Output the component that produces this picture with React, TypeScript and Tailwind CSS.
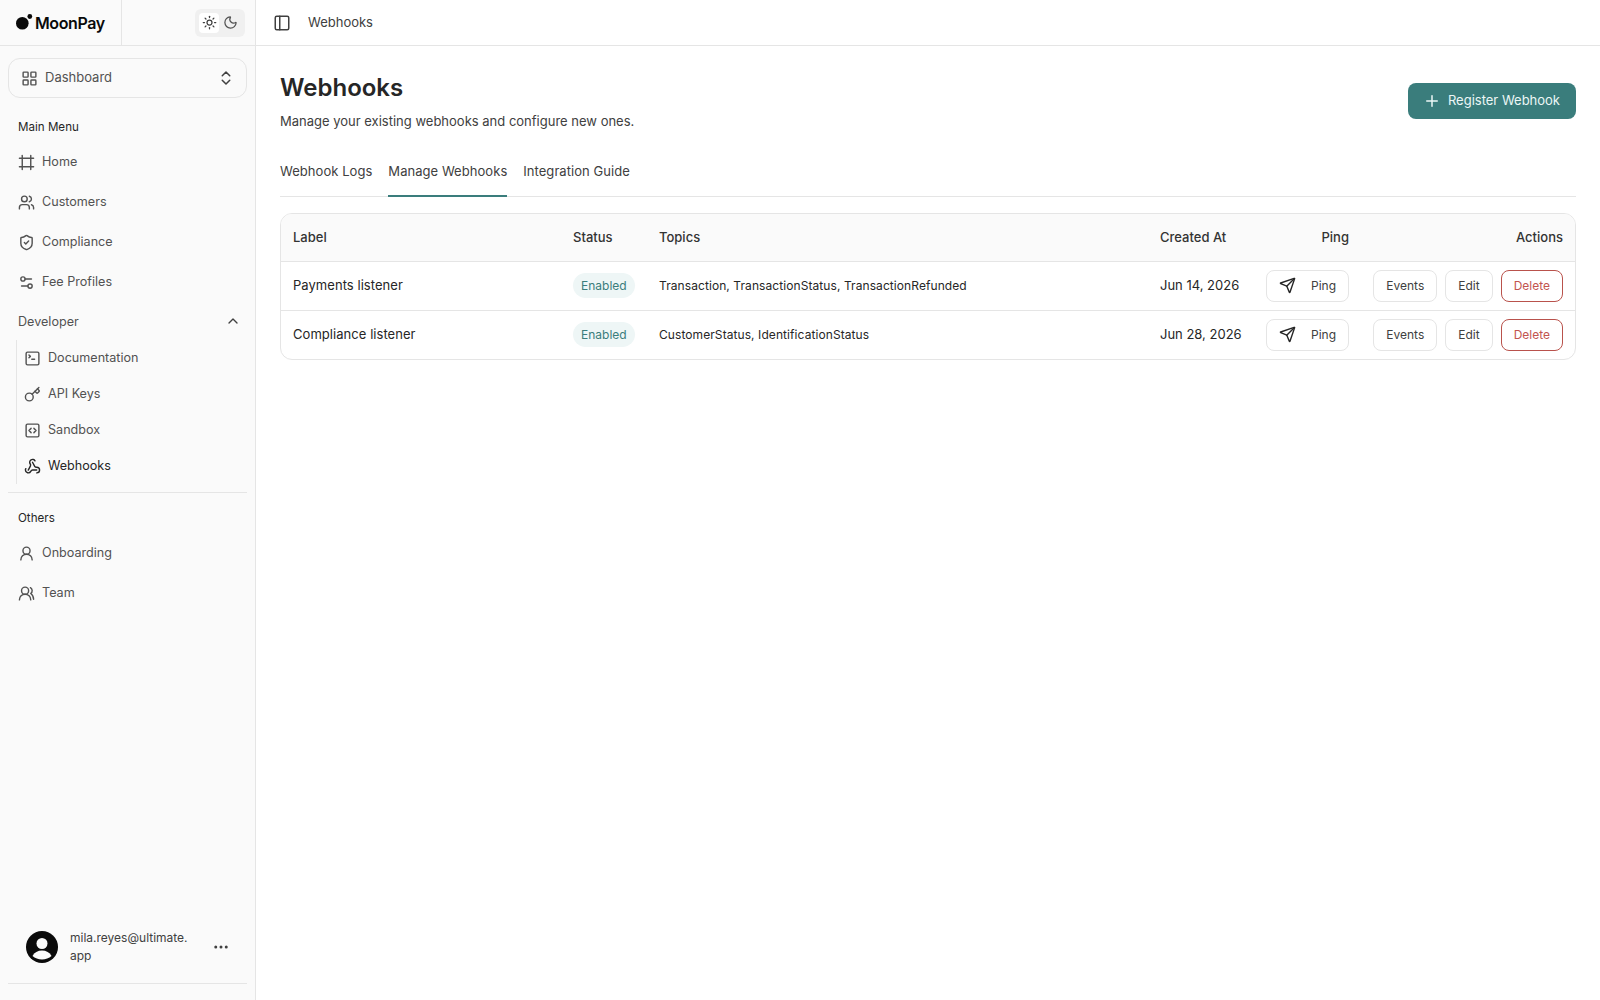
import {
  ChevronUp,
  ChevronsUpDown,
  Ellipsis,
  Frame,
  Key,
  LayoutGrid,
  Moon,
  PanelLeft,
  Plus,
  Send,
  Settings2,
  ShieldCheck,
  SquareCode,
  SquareTerminal,
  Sun,
  UserRound,
  Users,
  UsersRound,
  Webhook,
} from 'lucide-react';
import type { ReactNode } from 'react';

const webhooks = [
  {
    label: 'Payments listener',
    topics: 'Transaction, TransactionStatus, TransactionRefunded',
    created: 'Jun 14, 2026',
  },
  {
    label: 'Compliance listener',
    topics: 'CustomerStatus, IdentificationStatus',
    created: 'Jun 28, 2026',
  },
];

function NavItem({ icon, label }: { icon: ReactNode; label: string }) {
  return (
    <div className="flex h-10 items-center gap-[7px] pl-[18px] text-[12.6px] text-[#525252]">
      {icon}
      <span>{label}</span>
    </div>
  );
}

function SubItem({ icon, label, active }: { icon: ReactNode; label: string; active?: boolean }) {
  return (
    <div className={`flex h-9 items-center gap-[7px] pl-[7px] text-[12.6px] ${active ? 'text-[#262626]' : 'text-[#525252]'}`}>
      {icon}
      <span>{label}</span>
    </div>
  );
}

function ActionButton({ children, danger }: { children: ReactNode; danger?: boolean }) {
  return (
    <button
      className={`flex h-8 items-center rounded-lg border bg-white px-3 text-xs ${
        danger ? 'border-[#b9524c] text-[#c2554f]' : 'border-[#e5e5e5] text-[#404040]'
      }`}
    >
      {children}
    </button>
  );
}

function Sidebar() {
  return (
    <aside className="flex h-full w-[256px] shrink-0 flex-col border-r border-[#e5e5e5] bg-[#fafafa]">
      <div className="flex h-[46px] shrink-0 border-b border-[#e5e5e5]">
        <div className="flex w-[122px] items-center border-r border-[#e5e5e5] pl-4">
          <svg width="19" height="16" viewBox="0 0 19 16" className="-mt-[2px]">
            <circle cx="6.300" cy="9.300" r="6.300" fill="#0a0a0a" />
            <circle cx="13.800" cy="2.500" r="2.400" fill="#0a0a0a" />
          </svg>
          <span className="text-base font-semibold tracking-tight text-[#0a0a0a]">MoonPay</span>
        </div>
        <div className="flex flex-1 items-center justify-end pr-[10px]">
          <div className="flex h-7 w-[50px] items-center rounded-md bg-[#f0f0f0] p-1">
            <div className="flex h-5 w-5 items-center justify-center rounded-sm bg-white">
              <Sun size={15} className="text-[#404040]" />
            </div>
            <div className="flex h-5 w-[22px] items-center justify-center">
              <Moon size={15} className="text-[#525252]" />
            </div>
          </div>
        </div>
      </div>

      <div className="mx-2 mt-3 flex h-10 shrink-0 items-center justify-between rounded-xl border border-[#e5e5e5] pr-[11px] pl-3 text-[13px] text-[#525252]">
        <div className="flex items-center gap-[7px]">
          <LayoutGrid size={17} />
          <span>Dashboard</span>
        </div>
        <ChevronsUpDown size={18} className="text-[#404040]" />
      </div>

      <p className="mt-[21px] pl-[18px] text-[11.6px] leading-4 text-[#262626]">Main Menu</p>
      <div className="mt-[7px]">
        <NavItem icon={<Frame size={17} />} label="Home" />
        <NavItem icon={<Users size={17} />} label="Customers" />
        <NavItem icon={<ShieldCheck size={17} />} label="Compliance" />
        <NavItem icon={<Settings2 size={17} />} label="Fee Profiles" />
        <div className="flex h-10 items-center justify-between pr-[14px] pl-[18px] text-[12.6px] text-[#525252]">
          <span>Developer</span>
          <ChevronUp size={16} className="-mt-[2px] text-[#404040]" />
        </div>
      </div>
      <div className="-mt-[2px] ml-4 border-l border-[#e5e5e5]">
        <SubItem icon={<SquareTerminal size={17} />} label="Documentation" />
        <SubItem icon={<Key size={17} />} label="API Keys" />
        <SubItem icon={<SquareCode size={17} />} label="Sandbox" />
        <SubItem icon={<Webhook size={17} />} label="Webhooks" active />
      </div>
      <div className="mx-2 mt-2 border-t border-[#e5e5e5]" />
      <p className="mt-[17px] pl-[18px] text-[11.6px] leading-4 text-[#262626]">Others</p>
      <div className="mt-[7px]">
        <NavItem icon={<UserRound size={17} />} label="Onboarding" />
        <NavItem icon={<UsersRound size={17} />} label="Team" />
      </div>

      <div className="mx-2 mt-auto mb-4 border-b border-[#e5e5e5] pb-[18px]">
        <div className="flex items-center pl-[18px]">
          <svg width="32" height="32" viewBox="0 0 32 32" className="shrink-0">
            <circle cx="16" cy="16" r="16" fill="#0a0a0a" />
            <circle cx="16" cy="12.500" r="5.500" fill="#fafafa" />
            <path d="M6.500 25c1.800-3.600 5.400-5.500 9.500-5.500s7.700 1.900 9.500 5.500c-2.500 2.200-5.800 3.500-9.500 3.500s-7-1.300-9.500-3.500z" fill="#fafafa" />
          </svg>
          <div className="ml-3 w-[124px] text-xs leading-[18px] text-[#404040]">mila.reyes@ultimate.<br />app</div>
          <Ellipsis size={18} className="ml-[18px] text-[#404040]" />
        </div>
      </div>
    </aside>
  );
}

export default function App() {
  return (
    <div className="flex h-screen w-full bg-white font-['Inter',sans-serif] text-[#262626]">
      <Sidebar />
      <main className="flex min-w-0 flex-1 flex-col">
        <header className="flex h-[46px] shrink-0 items-center gap-[17px] border-b border-[#e5e5e5] pl-[17px]">
          <PanelLeft size={18} className="text-[#404040]" />
          <span className="text-[13px] text-[#404040]">Webhooks</span>
        </header>

        <div className="px-6 pt-[26px]">
          <div className="flex items-start justify-between">
            <div>
              <h1 className="text-2xl leading-8 font-semibold text-[#262626]">Webhooks</h1>
              <p className="mt-[7px] text-[13px] leading-5 text-[#404040]">Manage your existing webhooks and configure new ones.</p>
            </div>
            <button className="mt-[11px] flex h-9 items-center gap-[7px] rounded-lg bg-[#3a7d7c] pr-4 pl-[15px] text-[13px] text-[#ecf7f6]">
              <Plus size={18} />
              Register Webhook
            </button>
          </div>

          <div className="mt-[30px] flex gap-4 border-b border-[#e5e5e5]">
            <div className="pb-[14px] text-[13px] leading-5 tracking-[0.05px] text-[#404040]">Webhook Logs</div>
            <div className="-mb-px border-b-2 border-[#3a7d7c] pb-[14px] text-[13px] leading-5 tracking-[0.05px] text-[#404040]">Manage Webhooks</div>
            <div className="pb-[14px] text-[13px] leading-5 tracking-[0.05px] text-[#404040]">Integration Guide</div>
          </div>

          <div className="mt-[16px] overflow-hidden rounded-xl border border-[#e5e5e5]">
            <table className="w-full table-fixed border-collapse text-[13px]">
              <colgroup>
                <col className="w-[280px]" />
                <col className="w-[86px]" />
                <col className="w-[501px]" />
                <col className="w-[106px]" />
                <col className="w-[107px]" />
                <col />
              </colgroup>
              <thead>
                <tr className="h-[47px] border-b border-[#e5e5e5] bg-[#fafafa] text-[#333333]">
                  <th className="px-3 text-left font-medium">Label</th>
                  <th className="px-3 text-left font-medium">Status</th>
                  <th className="px-3 text-left font-medium">Topics</th>
                  <th className="px-3 text-left font-medium">Created At</th>
                  <th className="px-3 text-right font-medium">Ping</th>
                  <th className="px-3 text-right font-medium">Actions</th>
                </tr>
              </thead>
              <tbody>
                {webhooks.map((hook, i) => (
                  <tr key={hook.label} className={i === 0 ? 'h-[49px] border-b border-[#e5e5e5]' : 'h-[49px]'}>
                    <td className="px-3 tracking-[0.05px] text-[#262626]">{hook.label}</td>
                    <td className="px-3">
                      <span className="inline-flex h-[25px] items-center rounded-full bg-[#eef6f6] px-2 text-xs text-[#3a7d7c]">Enabled</span>
                    </td>
                    <td className="px-3 text-xs tracking-[0.08px] text-[#262626]">{hook.topics}</td>
                    <td className="px-3 whitespace-nowrap text-[#262626]">{hook.created}</td>
                    <td className="px-3">
                      <button className="ml-auto flex h-8 w-[83px] items-center gap-[15px] rounded-lg border border-[#e5e5e5] bg-white pl-3 text-xs text-[#404040]">
                        <Send size={17} className="text-[#262626]" />
                        Ping
                      </button>
                    </td>
                    <td className="px-3">
                      <div className="flex justify-end gap-2">
                        <ActionButton>Events</ActionButton>
                        <ActionButton>Edit</ActionButton>
                        <ActionButton danger>Delete</ActionButton>
                      </div>
                    </td>
                  </tr>
                ))}
              </tbody>
            </table>
          </div>
        </div>
      </main>
    </div>
  );
}
